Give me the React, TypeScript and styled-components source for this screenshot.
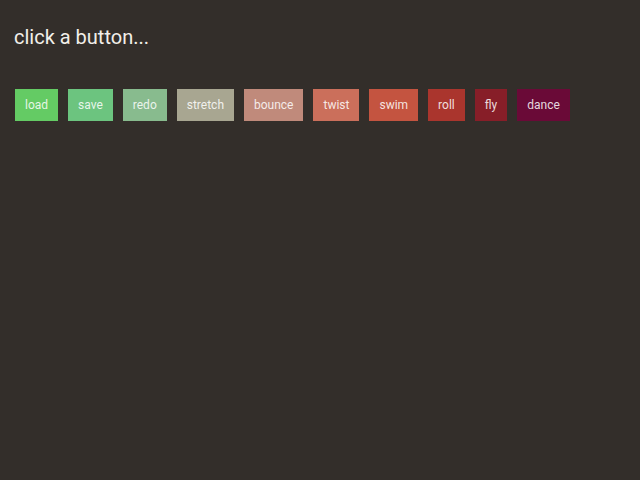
import React from "react";
import styled, { createGlobalStyle } from "styled-components";

const Global = createGlobalStyle`
  html, body { margin: 0; padding: 0; background: #332e2a; }
  body { font-family: Roboto, "Noto Sans", sans-serif; }
`;

const Page = styled.div`
  padding: 24px 14px;
  min-height: 480px;
  box-sizing: border-box;
`;

const Title = styled.h1`
  margin: 0;
  font-size: 20px;
  font-weight: 400;
  color: #f2efe9;
  line-height: 26px;
`;

const Row = styled.div`
  display: flex;
  gap: 10px;
  margin-top: 39px;
  padding-left: 1px;
`;

const Btn = styled.button<{ $bg: string }>`
  background: ${(p) => p.$bg};
  border: none;
  height: 32px;
  padding: 0 10px;
  color: rgba(255, 255, 255, 0.85);
  font-family: Roboto, sans-serif;
  font-size: 12px;
  cursor: pointer;
`;

const buttons: [string, string][] = [
  ["load", "#64cb64"],
  ["save", "#6cc47f"],
  ["redo", "#88bb8e"],
  ["stretch", "#a8a691"],
  ["bounce", "#c08a7b"],
  ["twist", "#cb6f5b"],
  ["swim", "#c45440"],
  ["roll", "#aa352d"],
  ["fly", "#871e28"],
  ["dance", "#6a0a37"],
];

export default function App() {
  return (
    <Page>
      <Global />
      <Title>click a button...</Title>
      <Row>
        {buttons.map(([label, bg]) => (
          <Btn key={label} $bg={bg}>
            {label}
          </Btn>
        ))}
      </Row>
    </Page>
  );
}
